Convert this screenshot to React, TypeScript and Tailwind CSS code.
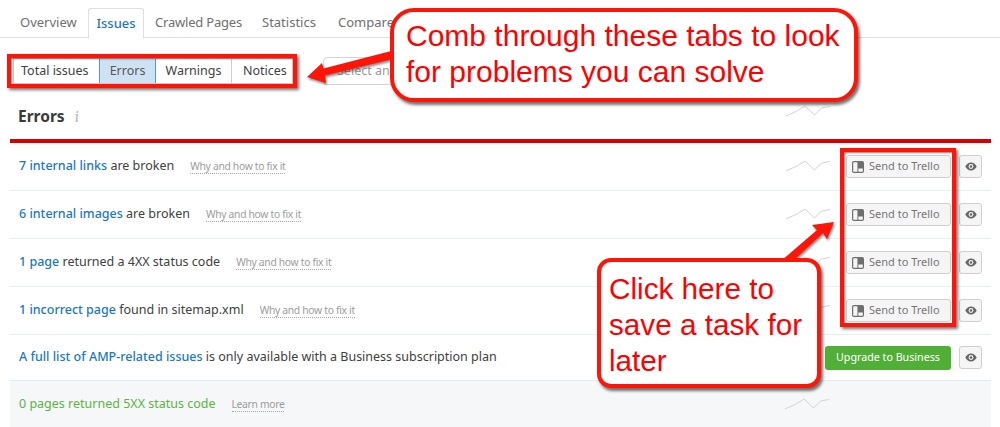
import React from 'react';

const Spark = () => (
  <svg width="46" height="14" viewBox="0 0 46 14" fill="none" className="block">
    <path d="M1 11 L11 6.5 L20 1 L29.5 10 L36.5 3 L45 1.5" stroke="#d4d4d4" strokeWidth="1" />
  </svg>
);

const TrelloIcon = () => (
  <svg width="12" height="12" viewBox="0 0 12 12" className="block">
    <rect x="0.6" y="0.6" width="10.8" height="10.8" rx="1.2" fill="none" stroke="#6f6f6f" strokeWidth="1.2" />
    <rect x="5.4" y="1" width="1" height="10" fill="#6f6f6f" />
    <rect x="6" y="1" width="5" height="6.5" fill="#6f6f6f" />
  </svg>
);

const EyeIcon = () => (
  <svg width="12" height="9" viewBox="0 0 12 9" className="block">
    <path d="M6 0.5 C3.4 0.5 1.3 2.3 0.3 4.5 C1.3 6.7 3.4 8.5 6 8.5 C8.6 8.5 10.7 6.7 11.7 4.5 C10.7 2.3 8.6 0.5 6 0.5 Z" fill="#666666" />
    <circle cx="6" cy="4.5" r="2.4" fill="#f5f5f5" />
    <circle cx="6" cy="4.5" r="1.3" fill="#666666" />
  </svg>
);

const EyeButton = () => (
  <div className="ml-2 flex h-[23px] w-[23px] items-center justify-center rounded-[3px] border border-[#cfcfcf] bg-[#f5f5f5]">
    <EyeIcon />
  </div>
);

const TrelloButton = () => (
  <div className="flex h-[23px] w-[105px] items-center rounded-[3px] border border-[#cfcfcf] bg-[#f5f5f5] pl-[5px] text-[11px] text-[#757575]">
    <TrelloIcon />
    <span className="ml-[5px]">Send to Trello</span>
  </div>
);

const Hint = ({ children }: { children: React.ReactNode }) => (
  <span className="ml-[16px] border-b border-dotted border-[#a8a8a8] text-[10.3px] leading-[13px] tracking-[-0.3px] text-[#9c9c9c]">
    {children}
  </span>
);

const rows = [
  { link: '7 internal links', rest: ' are broken' },
  { link: '6 internal images', rest: ' are broken' },
  { link: '1 page', rest: ' returned a 4XX status code' },
  { link: '1 incorrect page', rest: ' found in sitemap.xml' },
];

const App: React.FC = () => {
  return (
    <div className="relative h-[427px] w-[1000px] overflow-hidden bg-white text-[12.5px] text-[#404040] [font-family:'Noto_Sans',sans-serif]">
      {/* Top tabs */}
      <div className="flex h-[38px] items-end border-b border-[#dfdfdf] pl-[8px] text-[13px] text-[#6f6f6f]">
        <div className="flex h-[29px] w-[80px] items-center pl-[12px]">Overview</div>
        <div className="-mb-px flex h-[30px] w-[56px] items-center justify-center rounded-t-[3px] border border-b-0 border-[#dfdfdf] bg-white font-medium text-[#1b78c4]">
          Issues
        </div>
        <div className="flex h-[29px] w-[118px] items-center pl-[11px] tracking-[-0.2px]">Crawled Pages</div>
        <div className="flex h-[29px] w-[76px] items-center">Statistics</div>
        <div className="flex h-[29px] items-center">Compare</div>
      </div>

      {/* Filter buttons */}
      <div className="flex items-center pl-[13px] pt-[19px]">
        <div className="flex h-[26px] w-[280px] border border-[#cfcfcf]">
          <div className="flex w-[85px] items-center pl-[7px]">Total issues</div>
          <div className="flex w-[57px] items-center justify-center border-x border-[#4f9bd3] bg-[#cfe2f3] text-[#555555]">
            Errors
          </div>
          <div className="flex w-[76px] items-center justify-center border-r border-[#cfcfcf]">Warnings</div>
          <div className="flex flex-1 items-center pl-[11px]">Notices</div>
        </div>
        <div className="ml-[30px] flex h-[28px] w-[80px] items-center rounded-[4px] border border-[#d4d4d4] pl-[13px] text-[#9a9a9a]">
          Select an
        </div>
      </div>

      {/* Section */}
      <div className="ml-[10px] mr-[9px]">
        <div className="flex h-[54px] items-center justify-between pl-[8px] pr-[160px]">
          <div className="mt-[10px] flex items-center">
            <span className="text-[15.5px] font-bold text-[#3a3a3a]">Errors</span>
            <span className="ml-[10px] font-serif text-[16px] italic text-[#b5b5b5]">i</span>
          </div>
          <Spark />
        </div>
        <div className="h-[4px] bg-[#d80000]" />

        {rows.map((r) => (
          <div key={r.link} className="flex h-[48px] items-center justify-between border-b border-[#e8eff6] pl-[9px] pr-[9px]">
            <div className="flex items-center">
              <span className="whitespace-pre">
                <span className="font-medium text-[#1b78c4]">{r.link}</span>
                {r.rest}
              </span>
              <Hint>Why and how to fix it</Hint>
            </div>
            <div className="flex items-center">
              <div className="mr-[15px]">
                <Spark />
              </div>
              <TrelloButton />
              <EyeButton />
            </div>
          </div>
        ))}

        <div className="flex h-[46px] items-center justify-between border-b border-[#e3ebf3] pl-[9px] pr-[9px]">
          <span className="whitespace-pre">
            <span className="font-medium text-[#1b78c4]">A full list of AMP-related issues</span> is only available with a Business subscription plan
          </span>
          <div className="flex items-center">
            <div className="flex h-[24px] w-[126px] items-center justify-center rounded-[3px] bg-[#51ae36] text-[10.7px] text-white">
              Upgrade to Business
            </div>
            <EyeButton />
          </div>
        </div>

        <div className="flex h-[47px] items-center justify-between bg-[#f6f7f8] pl-[9px] pr-[161px]">
          <div className="flex items-center">
            <span className="text-[#5fb346]">0 pages returned 5XX status code</span>
            <Hint>Learn more</Hint>
          </div>
          <Spark />
        </div>
      </div>

      {/* Annotations */}
      <div className="absolute left-[7px] top-[54px] h-[34px] w-[290px] border-[4px] border-[#ff1408] shadow-[2px_2px_3px_rgba(0,0,0,0.55),inset_1px_1px_2px_rgba(0,0,0,0.5)]" />
      <div className="absolute left-[840px] top-[148px] h-[179px] w-[116px] border-[4px] border-[#ff1408] shadow-[2px_2px_3px_rgba(0,0,0,0.55),inset_1px_1px_2px_rgba(0,0,0,0.5)]" />

      <svg width="1000" height="427" viewBox="0 0 1000 427" className="absolute left-0 top-0" fill="none">
        <g style={{ filter: 'drop-shadow(1px 2px 1px rgba(0,0,0,0.45))' }} fill="#ff1408">
          <path d="M307 77 L322 63 L323.5 68.5 L395 50 L397 58 L325 75.5 L326 83 Z" />
          <path d="M834 222 L827 239 L823 233 L793 261 L781 261 L817 230 L812 225 Z" />
        </g>
      </svg>

      <div className="absolute left-[390px] top-[8px] h-[94px] w-[468px] whitespace-nowrap rounded-[24px] border-[4px] border-[#ff1408] bg-white pl-[12px] pt-[6px] text-[30px] leading-[36px] text-[#ff0000] shadow-[2px_3px_3px_rgba(0,0,0,0.55)] [font-family:'Liberation_Sans',sans-serif]">
        Comb through these tabs to look
        <br />
        for problems you can solve
      </div>

      <div className="absolute left-[597px] top-[258px] h-[130px] w-[224px] whitespace-nowrap rounded-[14px] border-[4px] border-[#ff1408] bg-white pl-[8px] pt-[9px] text-[29.7px] leading-[36px] text-[#ff0000] shadow-[2px_3px_3px_rgba(0,0,0,0.55)] [font-family:'Liberation_Sans',sans-serif]">
        Click here to
        <br />
        save a task for
        <br />
        later
      </div>
    </div>
  );
};

export default App;
